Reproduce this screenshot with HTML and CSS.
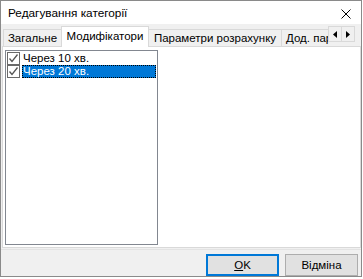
FILE: index.html
```html
<!DOCTYPE html>
<html>
    <head>
        <meta charset="utf-8">
        <link rel="stylesheet" href="styles.css">
    </head>
    <body>
        <div class="window">
            <div class="title">
                <span class="title__text">Редагування категорії</span>
                <svg class="title__close" width="10" height="10" viewBox="0 0 10 10">
                    <path d="M0.5 0.5 L9.5 9.5 M9.5 0.5 L0.5 9.5" stroke="#000" stroke-width="1" fill="none"/>
                </svg>
            </div>
            <div class="tabs">
                <div class="tabs__strip">
                    <div class="tab tab_general">Загальне</div>
                    <div class="tab tab_active">Модифікатори</div>
                    <div class="tab tab_params">Параметри розрахунку</div>
                    <div class="tab tab_extra">Дод. пар</div>
                </div>
                <div class="tabs__scroll">
                    <div class="tabs__btn">
                        <svg width="4" height="7" viewBox="0 0 4 7"><path d="M4 0 L0 3.5 L4 7 Z" fill="#000"/></svg>
                    </div>
                    <div class="tabs__btn">
                        <svg width="4" height="7" viewBox="0 0 4 7"><path d="M0 0 L4 3.5 L0 7 Z" fill="#000"/></svg>
                    </div>
                </div>
            </div>
            <div class="page">
                <div class="list">
                    <div class="list__item">
                        <span class="check">
                            <svg width="11" height="11" viewBox="0 0 11 11"><path d="M1.5 5.5 L4 8.5 L9.5 1.5" stroke="#555" stroke-width="1.3" fill="none"/></svg>
                        </span>
                        <span class="list__text">Через 10 хв.</span>
                    </div>
                    <div class="list__item">
                        <span class="check">
                            <svg width="11" height="11" viewBox="0 0 11 11"><path d="M1.5 5.5 L4 8.5 L9.5 1.5" stroke="#555" stroke-width="1.3" fill="none"/></svg>
                        </span>
                        <span class="list__text list__text_selected">Через 20 хв.</span>
                    </div>
                </div>
            </div>
            <div class="footer">
                <div class="button button_default"><u>O</u>K</div>
                <div class="button">Відміна</div>
            </div>
        </div>
    </body>
</html>
```

FILE: styles.css
```css
body, html {
    margin: 0;
    background-color: #fff;
    font-family: "Liberation Sans", Arial, sans-serif;
    font-size: 11.5px;
    color: #000;
}

* {
    box-sizing: border-box;
}

.window {
    width: 362px;
    height: 277px;
    border: 1px solid #8a8a8a;
    background-color: #f0f0f0;
    display: flex;
    flex-direction: column;
}

.title {
    height: 23px;
    background-color: #fff;
    display: flex;
    align-items: center;
    justify-content: space-between;
    padding: 0 10px 0 7px;
    flex-shrink: 0;
}

.title__text {
    font-size: 11.8px;
    margin-top: 1px;
}

.title__close {
    margin-top: 2px;
}

.tabs {
    position: relative;
    height: 22px;
    flex-shrink: 0;
}

.tabs__strip {
    display: flex;
    align-items: flex-end;
    height: 22px;
    padding-left: 2px;
}

.tab {
    height: 17px;
    padding: 0;
    border: 1px solid #d9d9d9;
    border-bottom: none;
    background-color: #f0f0f0;
    white-space: nowrap;
    text-align: center;
    line-height: 16px;
    flex-shrink: 0;
    margin-left: -1px;
}

.tab_general {
    width: 59px;
    margin-left: 0;
}

.tab_active {
    width: 88px;
    height: 21px;
    margin-bottom: -1px;
    background-color: #fff;
    line-height: 18px;
    position: relative;
    z-index: 1;
}

.tab_params {
    width: 134px;
}

.tab_extra {
    border-right: none;
    text-align: left;
    padding-left: 4px;
}

.tabs__scroll {
    position: absolute;
    top: 2px;
    left: 327px;
    display: flex;
    z-index: 2;
}

.tabs__btn {
    width: 14px;
    height: 16px;
    border: 1px solid #d9d9d9;
    background-color: #f0f0f0;
    display: flex;
    align-items: center;
    justify-content: center;
    margin-right: -1px;
}

.page {
    height: 202px;
    margin: 0 0 0 1px;
    border: 1px solid #d9d9d9;
    background-color: #fff;
    padding: 3px 2px;
    flex-shrink: 0;
}

.list {
    width: 153px;
    height: 195px;
    border: 1px solid #828790;
    padding-top: 1px;
}

.list__item {
    display: flex;
    align-items: center;
    height: 13px;
}

.check {
    width: 13px;
    height: 13px;
    border: 1px solid #6a6a6a;
    background-color: #fff;
    margin-left: 1px;
    margin-right: 2px;
    display: flex;
    align-items: center;
    justify-content: center;
    flex-shrink: 0;
}

.list__text {
    height: 13px;
    line-height: 13px;
    padding-left: 1px;
    flex-grow: 1;
}

.list__text_selected {
    background-color: #0078d7;
    color: #fff;
    outline: 1px dotted #000;
    outline-offset: -1px;
    margin-right: 1px;
}

.footer {
    flex-grow: 1;
    border-top: 1px solid #e3e3e3;
    margin-top: 1px;
    display: flex;
    justify-content: flex-end;
    align-items: flex-start;
    padding: 4px 3px 0 0;
    gap: 6px;
}

.button {
    width: 73px;
    height: 22px;
    border: 1px solid #adadad;
    background-color: #e1e1e1;
    display: flex;
    align-items: center;
    justify-content: center;
}

.button_default {
    border: 2px solid #0078d7;
}
```
